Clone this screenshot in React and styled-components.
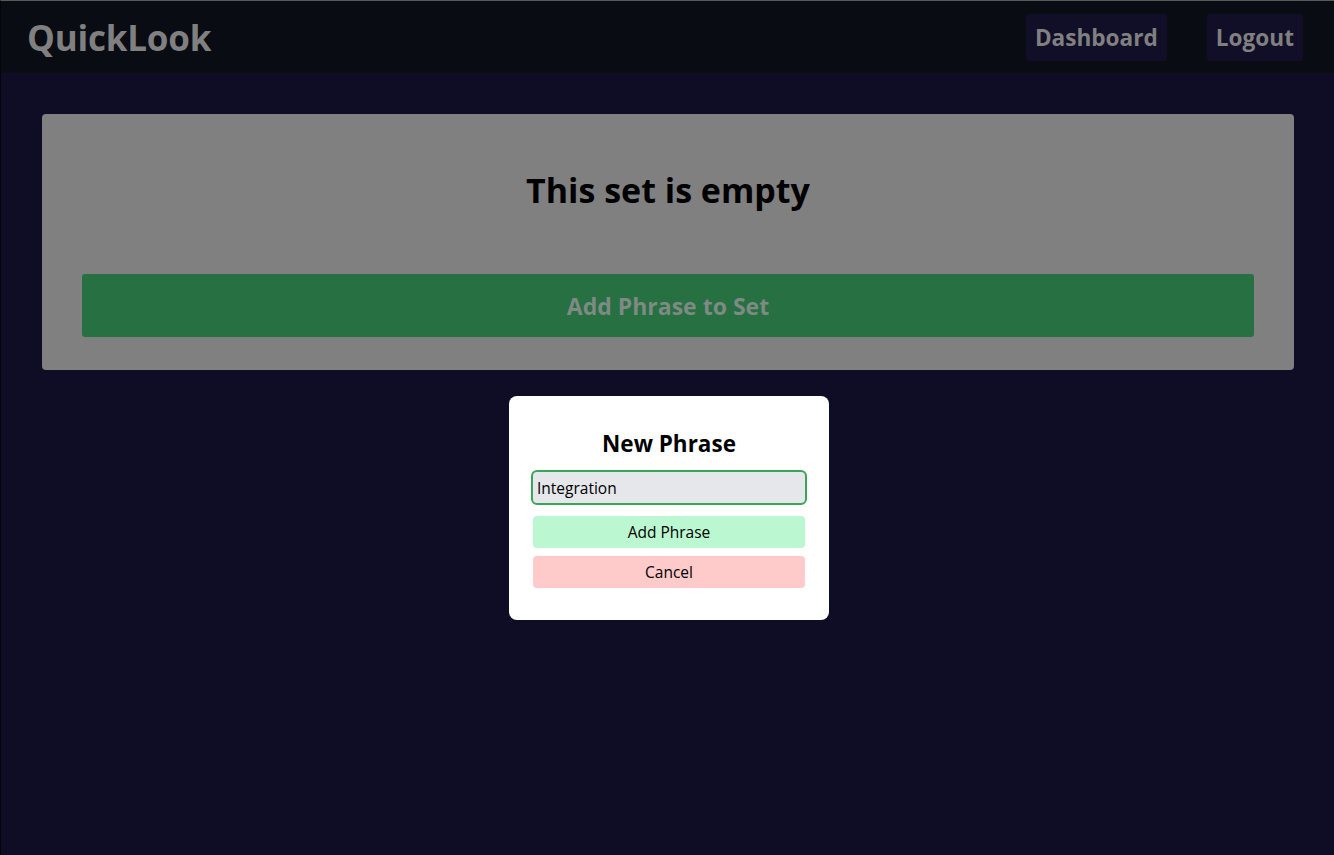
import React from "react";
import styled, { createGlobalStyle } from "styled-components";

const Global = createGlobalStyle`
  html, body { margin: 0; padding: 0; background: #0f0d26; }
  body { font-family: "Open Sans", "Noto Sans", sans-serif; }
  * { box-sizing: border-box; }
`;

const Page = styled.div`
  min-height: 855px;
  background: #0f0d26;
  border-top: 1px solid #5a5a5a;
  border-left: 1px solid #050509;
`;

const Header = styled.header`
  height: 72px;
  background: #0a0c14;
  display: flex;
  align-items: center;
  justify-content: space-between;
  padding: 0 31px 0 26px;
`;

const Logo = styled.div`
  font-size: 35px;
  font-weight: 700;
  color: #808080;
  letter-spacing: -0.2px;
`;

const Nav = styled.nav`
  display: flex;
  gap: 40px;
`;

const NavButton = styled.button`
  background: #110e28;
  border: none;
  border-radius: 4px;
  color: #808080;
  font-family: inherit;
  font-size: 22.6px;
  font-weight: 700;
  height: 47px;
  padding: 0 9px;
`;

const Main = styled.main`
  padding: 41px 40px 0 41px;
  display: flex;
  flex-direction: column;
  align-items: center;
`;

const Card = styled.section`
  width: 100%;
  background: #808080;
  border-radius: 4px;
  padding: 52px 40px 33px;
  display: flex;
  flex-direction: column;
  align-items: center;
`;

const Title = styled.h1`
  margin: 0;
  font-size: 34px;
  font-weight: 700;
  color: #000;
  line-height: 48px;
`;

const BigButton = styled.button`
  margin-top: 60px;
  width: 100%;
  height: 63px;
  background: #267042;
  border: none;
  border-radius: 3px;
  color: #7f8a84;
  font-family: inherit;
  font-size: 23px;
  font-weight: 700;
`;

const Modal = styled.div`
  margin-top: 26px;
  margin-left: 2px;
  width: 320px;
  background: #fff;
  border-radius: 8px;
  padding: 32px 22px 32px;
  display: flex;
  flex-direction: column;
  align-items: center;
`;

const ModalTitle = styled.h2`
  margin: 0 0 10px;
  font-size: 22.5px;
  font-weight: 700;
  color: #000;
  line-height: 32px;
`;

const Input = styled.input`
  width: 100%;
  height: 35px;
  background: #e5e7eb;
  border: 2px solid #3aa65a;
  border-radius: 6px;
  font-family: inherit;
  font-size: 15.5px;
  color: #000;
  padding: 0 4px;
  outline: none;
  caret-color: #000;
`;

const ActionButton = styled.button`
  width: 272px;
  height: 32px;
  margin-top: ${(p) => p.$gap}px;
  background: ${(p) => p.$bg};
  border: none;
  border-radius: 4px;
  font-family: inherit;
  font-size: 15.5px;
  color: #000;
`;

export default function App() {
  return (
    <>
      <Global />
      <Page>
        <Header>
          <Logo>QuickLook</Logo>
          <Nav>
            <NavButton>Dashboard</NavButton>
            <NavButton>Logout</NavButton>
          </Nav>
        </Header>
        <Main>
          <Card>
            <Title>This set is empty</Title>
            <BigButton>Add Phrase to Set</BigButton>
          </Card>
          <Modal>
            <ModalTitle>New Phrase</ModalTitle>
            <Input defaultValue="Integration" autoFocus />
            <ActionButton $bg="#bbf7d0" $gap={11}>Add Phrase</ActionButton>
            <ActionButton $bg="#fecaca" $gap={8}>Cancel</ActionButton>
          </Modal>
        </Main>
      </Page>
    </>
  );
}
